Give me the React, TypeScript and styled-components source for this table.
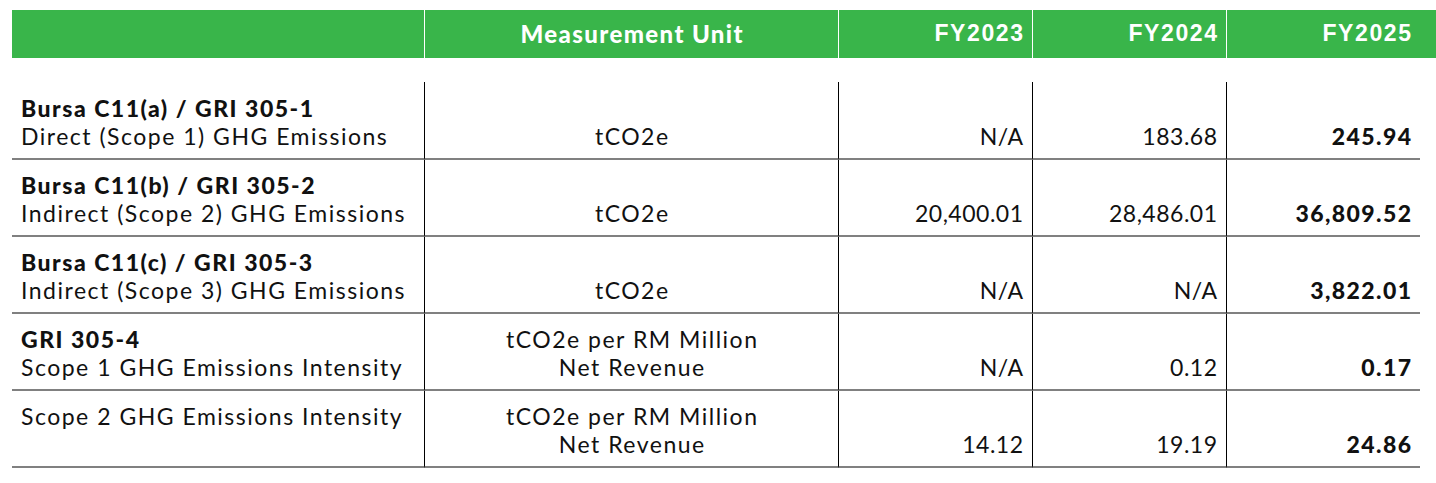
import React from 'react'
import styled, { createGlobalStyle } from 'styled-components'

type Row = {
  code?: string
  label: string
  unit: string[]
  values: [string, string, string]
}

const rows: Array<Row> = [
  { code: 'Bursa C11(a) / GRI 305-1', label: 'Direct (Scope 1) GHG Emissions', unit: ['tCO2e'], values: ['N/A', '183.68', '245.94'] },
  { code: 'Bursa C11(b) / GRI 305-2', label: 'Indirect (Scope 2) GHG Emissions', unit: ['tCO2e'], values: ['20,400.01', '28,486.01', '36,809.52'] },
  { code: 'Bursa C11(c) / GRI 305-3', label: 'Indirect (Scope 3) GHG Emissions', unit: ['tCO2e'], values: ['N/A', 'N/A', '3,822.01'] },
  { code: 'GRI 305-4', label: 'Scope 1 GHG Emissions Intensity', unit: ['tCO2e per RM Million', 'Net Revenue'], values: ['N/A', '0.12', '0.17'] },
  { label: 'Scope 2 GHG Emissions Intensity', unit: ['tCO2e per RM Million', 'Net Revenue'], values: ['14.12', '19.19', '24.86'] }
]

const years = ['FY2023', 'FY2024', 'FY2025']

const GlobalStyle = createGlobalStyle`
  body {
    margin: 0;
    background: #fff;
    font-family: 'Lato', 'Noto Sans', sans-serif;
    color: #111;
  }
`

const columns = '412px 414px 194px 194px 194px'

const Page = styled.div`
  padding: 10px 0 0 12px;
`

const Header = styled.div`
  display: grid;
  grid-template-columns: ${columns};
  height: 48px;
  background: #39b54a;
  color: #fff;
`

const HeadCell = styled.div<{ $align: 'left' | 'center' | 'right' }>`
  display: flex;
  align-items: center;
  justify-content: ${({ $align }) => ($align === 'right' ? 'flex-end' : $align === 'center' ? 'center' : 'flex-start')};
  padding: 0 9px 1px;
  border-left: ${({ $align }) => ($align === 'left' ? 'none' : '1px solid #fff')};
`

const UnitTitle = styled.span`
  font-family: 'Lato', sans-serif;
  font-weight: 900;
  font-size: 24px;
  letter-spacing: 1.4px;
  margin-right: -1.4px;
`

const YearTitle = styled.span`
  font-family: 'Liberation Sans', Arial, sans-serif;
  font-weight: 700;
  font-size: 23px;
  letter-spacing: 1.6px;
  margin-right: -1.6px;
`

const Body = styled.div`
  display: grid;
  grid-template-columns: ${columns};
  grid-template-rows: 78px;
  grid-auto-rows: 77px;
  margin-top: 24px;
`

const Cell = styled.div<{ $first?: boolean, $valign: 'top' | 'bottom', $align: 'left' | 'center' | 'right' }>`
  box-sizing: border-box;
  display: flex;
  flex-direction: column;
  justify-content: ${({ $valign }) => ($valign === 'top' ? 'flex-start' : 'flex-end')};
  align-items: ${({ $align }) => ($align === 'right' ? 'flex-end' : $align === 'center' ? 'center' : 'flex-start')};
  text-align: ${({ $align }) => $align};
  padding: 11px 9px 8px;
  border-bottom: 2px solid #808080;
  border-left: ${({ $first }) => ($first ? 'none' : '1px solid #000')};
  font-size: 23px;
  line-height: 28px;
  white-space: nowrap;

  &:nth-child(-n+5) {
    padding-top: 12px;
  }
`

const Text = styled.div`
  letter-spacing: 1.5px;
  margin-right: -1.5px;
`

const Code = styled(Text)`
  font-weight: 900;
`

const Value = styled.span<{ $strong?: boolean }>`
  font-weight: ${({ $strong }) => ($strong ? 900 : 400)};
  letter-spacing: ${({ $strong }) => ($strong ? '1.4px' : '0.5px')};
  margin-right: ${({ $strong }) => ($strong ? '-1.4px' : '-0.5px')};
`

export default function App (): JSX.Element {
  return (
    <Page>
      <GlobalStyle />
      <Header>
        <HeadCell $align='left' />
        <HeadCell $align='center'><UnitTitle>Measurement Unit</UnitTitle></HeadCell>
        {years.map((y) => (
          <HeadCell key={y} $align='right'><YearTitle>{y}</YearTitle></HeadCell>
        ))}
      </Header>
      <Body>
        {rows.map((row, i) => (
          <React.Fragment key={`row-${i}`}>
            <Cell $first $valign='top' $align='left'>
              {row.code !== undefined && <Code>{row.code}</Code>}
              <Text>{row.label}</Text>
            </Cell>
            <Cell $valign='bottom' $align='center'>
              {row.unit.map((u) => <Text key={u}>{u}</Text>)}
            </Cell>
            {row.values.map((v, j) => (
              <Cell key={`v-${j}`} $valign='bottom' $align='right'>
                <Value $strong={j === 2}>{v}</Value>
              </Cell>
            ))}
          </React.Fragment>
        ))}
      </Body>
    </Page>
  )
}
